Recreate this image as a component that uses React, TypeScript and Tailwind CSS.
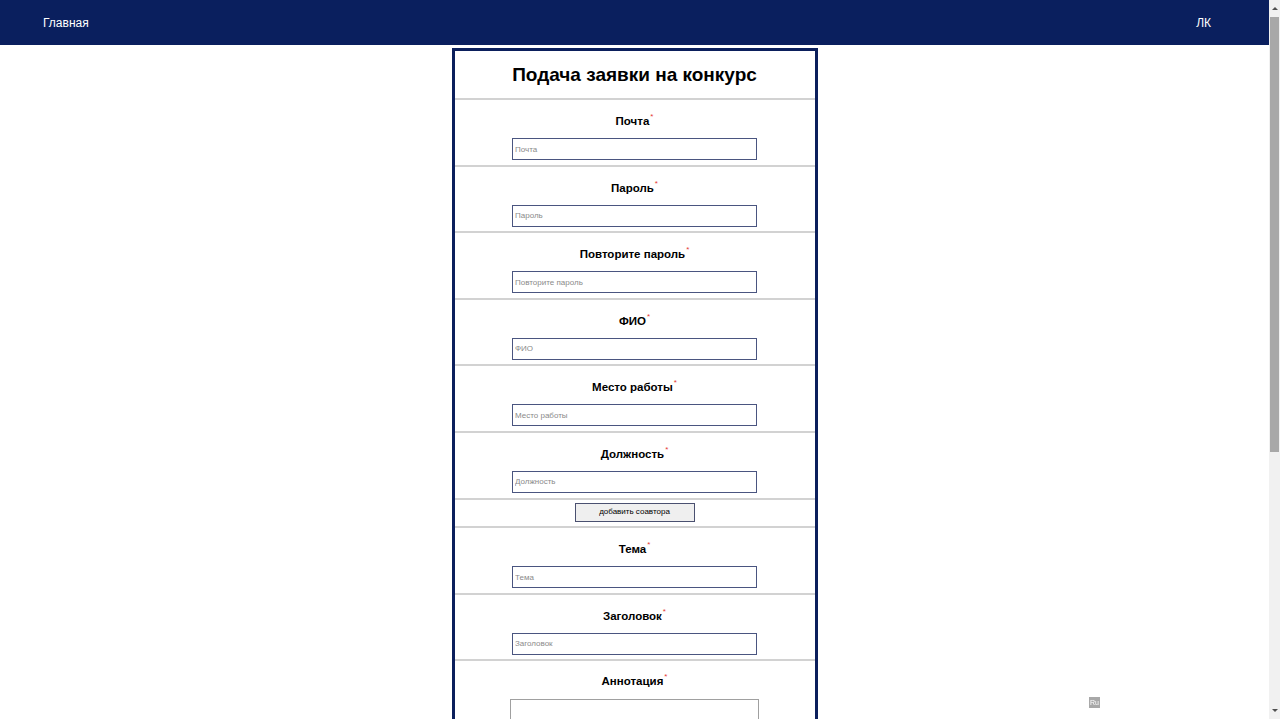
import React from "react";

const fields = [
  "Почта",
  "Пароль",
  "Повторите пароль",
  "ФИО",
  "Место работы",
  "Должность",
];
const fields2 = ["Тема", "Заголовок"];

function Label({ name }: { name: string }) {
  return (
    <div className="text-[11.5px] leading-[16px] font-bold text-black">
      {name}
      <span className="relative -top-[6px] ml-[1px] text-[8px] leading-[8px] text-[#e53935] font-normal">*</span>
    </div>
  );
}

function Field({ name }: { name: string }) {
  return (
    <div className="border-t-2 border-[#d2d2d2] flex flex-col items-center pt-[13px] pb-[4.6px]">
      <Label name={name} />
      <input
        placeholder={name}
        className="mt-[9px] w-[245px] h-[22px] border border-[#4a5580] px-[2px] text-[8px] placeholder:text-[#8a8a8a] outline-none bg-white"
      />
    </div>
  );
}

export default function App() {
  return (
    <div className="min-h-[1400px] bg-white pr-[11px]" style={{ fontFamily: '"Liberation Sans", Arial, sans-serif' }}>
      <header className="h-[45px] bg-[#0a1f5e] flex items-center justify-between pl-[43px] pr-[58px] text-white text-[12px]">
        <span>Главная</span>
        <span>ЛК</span>
      </header>
      <div className="flex justify-center pt-[3px]">
        <div className="w-[366px] border-[3px] border-[#0b1f5c]">
          <h1 className="text-[19px] leading-[24px] font-bold text-center text-black pt-[12px] pb-[11px]">
            Подача заявки на конкурс
          </h1>
          {fields.map((f) => (
            <Field key={f} name={f} />
          ))}
          <div className="border-t-2 border-[#d2d2d2] flex justify-center pt-[3px] pb-[4.6px]">
            <button className="w-[120px] h-[19px] bg-[#efefef] border border-[#4a5070] text-[8px] text-black">
              добавить соавтора
            </button>
          </div>
          {fields2.map((f) => (
            <Field key={f} name={f} />
          ))}
          <div className="border-t-2 border-[#d2d2d2] flex flex-col items-center pt-[12px] pb-[5px]">
            <Label name="Аннотация" />
            <textarea className="mt-[10px] w-[249px] h-[100px] border border-[#a0a0a0] outline-none resize-none" />
          </div>
        </div>
      </div>
      <div className="fixed left-[1089px] top-[697px] w-[11px] h-[11px] bg-[#a8a8a8] text-white text-[7px] leading-[11px] text-center">
        Ru
      </div>
      <div className="fixed right-0 top-0 w-[11px] h-screen bg-[#f1f1f1] flex flex-col items-center">
        <div className="h-[17px] flex items-center justify-center">
          <div className="w-0 h-0 border-l-[3px] border-r-[3px] border-b-[3px] border-l-transparent border-r-transparent border-b-[#505050]" />
        </div>
        <div className="w-[9px] h-[435px] bg-[#a8a8a8]" />
        <div className="flex-1" />
        <div className="h-[17px] flex items-center justify-center">
          <div className="w-0 h-0 border-l-[3px] border-r-[3px] border-t-[3px] border-l-transparent border-r-transparent border-t-[#505050]" />
        </div>
      </div>
    </div>
  );
}
